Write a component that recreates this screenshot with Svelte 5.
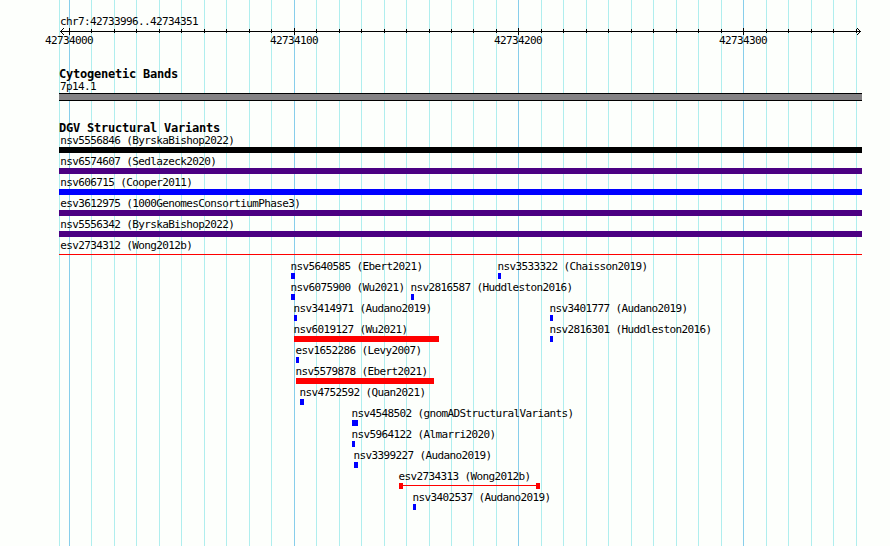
<script lang="ts">
  type Feature = {
    name: string;
    x: number;
    width: number;
    color: string;
    shape?: 'box' | 'line' | 'span';
  };

  const LEFT = 59;
  const WIDTH = 803;

  const major = [69, 294, 518, 743];
  const minor = [
    91, 114, 136, 159, 181, 204, 226, 249, 271,
    316, 339, 361, 384, 406, 429, 451, 473, 496,
    541, 563, 586, 608, 631, 653, 676, 698, 721,
    766, 788, 811, 833, 856,
  ];
  const majorLabels = ['42734000', '42734100', '42734200', '42734300'];

  const full = (name: string, color: string, shape: Feature['shape'] = 'box'): Feature[] =>
    [{ name, x: LEFT, width: WIDTH, color, shape }];
  const small = (name: string, x: number, width = 3): Feature => ({ name, x, width, color: '#00f' });

  const lanes: Feature[][] = [
    full('nsv5556846 (ByrskaBishop2022)', '#000'),
    full('nsv6574607 (Sedlazeck2020)', '#4b0082'),
    full('nsv606715 (Cooper2011)', '#00f'),
    full('esv3612975 (1000GenomesConsortiumPhase3)', '#4b0082'),
    full('nsv5556342 (ByrskaBishop2022)', '#4b0082'),
    full('esv2734312 (Wong2012b)', '#f00', 'line'),
    [small('nsv5640585 (Ebert2021)', 291, 4), small('nsv3533322 (Chaisson2019)', 498)],
    [small('nsv6075900 (Wu2021)', 291, 4), small('nsv2816587 (Huddleston2016)', 411)],
    [small('nsv3414971 (Audano2019)', 294), small('nsv3401777 (Audano2019)', 550)],
    [{ name: 'nsv6019127 (Wu2021)', x: 294, width: 145, color: '#f00' }, small('nsv2816301 (Huddleston2016)', 550)],
    [small('esv1652286 (Levy2007)', 296)],
    [{ name: 'nsv5579878 (Ebert2021)', x: 296, width: 138, color: '#f00' }],
    [small('nsv4752592 (Quan2021)', 300, 4)],
    [small('nsv4548502 (gnomADStructuralVariants)', 352, 6)],
    [small('nsv5964122 (Almarri2020)', 352)],
    [small('nsv3399227 (Audano2019)', 354, 4)],
    [{ name: 'esv2734313 (Wong2012b)', x: 399, width: 141, color: '#f00', shape: 'span' }],
    [small('nsv3402537 (Audano2019)', 413)],
  ];
</script>

<main class="browser">
  <svg class="gridlines" width="890" height="546" shape-rendering="crispEdges" aria-hidden="true">
    {#each [LEFT, ...minor] as x}
      <rect {x} y="0" width="1" height="546" fill="#afeeee" />
    {/each}
    {#each major as x}
      <rect {x} y="0" width="1" height="546" fill="#87ceeb" />
    {/each}
  </svg>

  <header class="region">chr7:42733996..42734351</header>

  <svg class="ruler" width="890" height="22" shape-rendering="crispEdges">
    <rect x="60" y="4" width="801" height="1" />
    {#each [0, 1, 2, 3] as i}
      <rect x={60 + i} y={4 - i} width="1" height="1" />
      <rect x={60 + i} y={4 + i} width="1" height="1" />
      <rect x={860 - i} y={4 - i} width="1" height="1" />
      <rect x={860 - i} y={4 + i} width="1" height="1" />
    {/each}
    {#each minor as x}
      <rect {x} y="2" width="1" height="4" />
    {/each}
    {#each major as x, i}
      <rect {x} y="1" width="1" height="7" />
      <text x={x - 24} y="17">{majorLabels[i]}</text>
    {/each}
  </svg>

  <section class="track bands">
    <h2>Cytogenetic Bands</h2>
    <div class="band-name">7p14.1</div>
    <div class="band"></div>
  </section>

  <section class="track variants">
    <h2>DGV Structural Variants</h2>
    {#each lanes as lane}
      <div class="lane">
        {#each lane as f}
          <div class="feature" style:margin-left="{f.x - LEFT}px">
            <span class="label" class:clipped={f.x === LEFT}>{f.name}</span>
            <span class="glyph {f.shape ?? 'box'}" style:width="{f.width}px" style:color={f.color}></span>
          </div>
        {/each}
      </div>
    {/each}
  </section>
</main>

<style>
  :global(body) { background: #fdfffc; }
  .browser {
    position: relative;
    width: 890px;
    height: 546px;
    overflow: hidden;
    color: #000;
    font: 11px/15px "DejaVu Sans Mono", "Liberation Mono", monospace;
    letter-spacing: -0.622px;
  }
  .gridlines {
    position: absolute;
    inset: 0;
    z-index: -1;
  }
  .region {
    height: 13px;
    padding: 14px 0 0 60px;
  }
  .ruler { display: block; }
  .track {
    width: 803px;
    margin-left: 59px;
  }
  h2 {
    margin: 0;
    height: 12px;
    font-size: 12px;
    line-height: 12px;
    font-weight: 700;
    letter-spacing: -0.224px;
  }
  .bands { padding-top: 19px; }
  .band-name {
    height: 13px;
    line-height: 13px;
    padding-left: 1px;
  }
  .band {
    height: 6px;
    background: #848284;
    border: solid #000;
    border-width: 1px 0;
  }
  .variants { padding-top: 21px; }
  .variants h2 { height: 10px; }
  .lane {
    display: grid;
    height: 21px;
  }
  .feature {
    grid-area: 1 / 1;
    display: flex;
    flex-direction: column;
    align-items: flex-start;
  }
  .label {
    height: 15px;
    line-height: 17px;
    margin-left: -0.5px;
    white-space: nowrap;
  }
  .label.clipped { margin-left: 1.3px; }
  .glyph {
    height: 6px;
    background: currentColor;
  }
  .line {
    height: 1px;
    margin-top: 2px;
  }
  .span {
    background: linear-gradient(currentColor, currentColor) 0 2px / 100% 1px no-repeat;
    box-sizing: border-box;
    border: solid currentColor;
    border-width: 0 4px;
  }
</style>
